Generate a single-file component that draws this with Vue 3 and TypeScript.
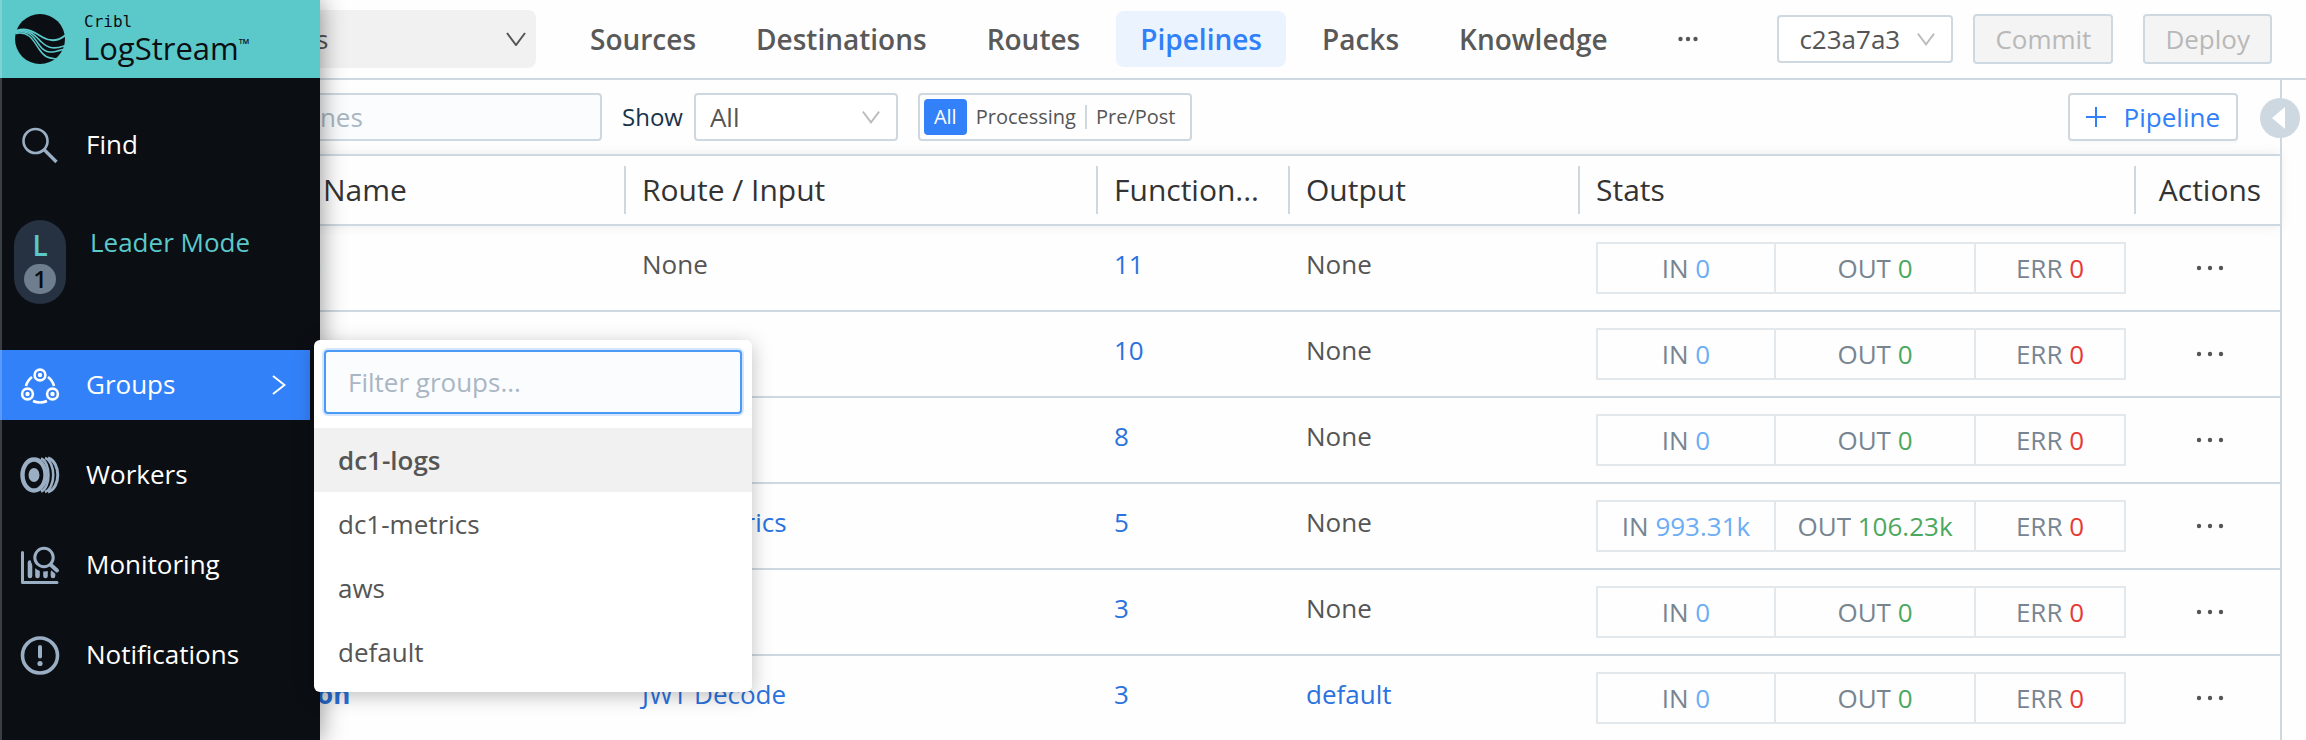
<script setup lang="ts">
import { ref } from 'vue'

interface Pipeline {
  name: string
  route: string
  functions: number
  output: string
  in: string
  out: string
  err: string
}

const tabs = ['Sources', 'Destinations', 'Routes', 'Pipelines', 'Packs', 'Knowledge']
const activeTab = ref('Pipelines')

const groups = ['dc1-logs', 'dc1-metrics', 'aws', 'default']
const activeGroup = ref('dc1-logs')
const groupFilter = ref('')

const kinds = ['Processing', 'Pre/Post']

const pipelines: Pipeline[] = [
  { name: 'main', route: 'None', functions: 11, output: 'None', in: '0', out: '0', err: '0' },
  { name: 'dns', route: 'None', functions: 10, output: 'None', in: '0', out: '0', err: '0' },
  { name: 'logs', route: 'None', functions: 8, output: 'None', in: '0', out: '0', err: '0' },
  { name: 'stats', route: 'dc1_metrics', functions: 5, output: 'None', in: '993.31k', out: '106.23k', err: '0' },
  { name: 'trim', route: 'None', functions: 3, output: 'None', in: '0', out: '0', err: '0' },
  { name: 'session', route: 'JWT Decode', functions: 3, output: 'default', in: '0', out: '0', err: '0' },
]
</script>

<template>
  <div class="app">
    <aside class="sidebar">
      <a href="#" class="brand">
        <svg class="brand-mark" viewBox="0 0 50 50" aria-hidden="true">
          <circle cx="25" cy="25" r="25" fill="#0b0e13" />
          <g fill="none" stroke="#5bc9ca" stroke-linecap="round">
            <path stroke-width="1.8" d="M1 16.500C14 13 20 19 28 23.500S43 27 50 21.500" />
            <path stroke-width="1.6" d="M1 17.500C15 14 20 22 27 28.500S40 35 49 32" />
            <path stroke-width="1.5" d="M1 18.500C15 15 19 24 25 32S37 39 47.500 35.500" />
            <path stroke-width="1.5" d="M1 19.500C14 17 18 26 24 35S34 44 41 45" />
          </g>
        </svg>
        <span class="brand-text">
          <span class="brand-top">Cribl</span>
          <span class="brand-name">LogStream<sup>™</sup></span>
        </span>
      </a>

      <nav class="menu">
        <a href="#" class="item find">
          <svg class="icon" viewBox="0 0 40 40" aria-hidden="true">
            <g fill="none" stroke="#9aaec4" stroke-width="2.6">
              <circle cx="15.500" cy="16" r="12" />
              <path stroke-width="3.400" d="M24 24.500 36.500 37" />
            </g>
          </svg>
          <span>Find</span>
        </a>

        <a href="#" class="leader">
          <span class="leader-badge">
            <b>L</b>
            <span class="leader-count">1</span>
          </span>
          <span>Leader Mode</span>
        </a>

        <a href="#" class="item current">
          <svg class="icon" viewBox="0 0 40 40" aria-hidden="true">
            <g fill="none" stroke="#fff" stroke-width="2.6">
              <circle cx="20" cy="10" r="5.400" />
              <circle cx="7.500" cy="29" r="5.400" />
              <circle cx="32.500" cy="29" r="5.400" />
              <path d="M12 12A16 16 0 0 0 6 21" />
              <path d="M28 12A16 16 0 0 1 34 21" />
              <path d="M13 36Q20 39 27 36" />
            </g>
            <g fill="#fff">
              <circle cx="20" cy="10" r="2.200" />
              <circle cx="7.500" cy="29" r="2.200" />
              <circle cx="32.500" cy="29" r="2.200" />
            </g>
          </svg>
          <span>Groups</span>
          <svg class="caret" viewBox="0 0 14 20" aria-hidden="true">
            <path d="M1 1 12.500 10 1 19" fill="none" stroke="#fff" stroke-width="2" />
          </svg>
        </a>
        <a href="#" class="item">
          <svg class="icon" viewBox="0 0 40 40" aria-hidden="true">
            <g fill="none" stroke="#9aaec4">
              <ellipse cx="14" cy="20" rx="11.500" ry="15.500" stroke-width="4.400" />
              <path stroke-width="2.600" d="M21 3.500C31 7 31 33 21 36.500" />
              <path stroke-width="2.600" d="M25 3C36 7 36 33 25 37" />
              <path stroke-width="3" d="M28 3C41 7 41 33 28 37" />
            </g>
            <ellipse cx="14" cy="20" rx="5.500" ry="7" fill="#9aaec4" />
          </svg>
          <span>Workers</span>
        </a>
        <a href="#" class="item">
          <svg class="icon" viewBox="0 0 40 40" aria-hidden="true">
            <g fill="none" stroke="#9aaec4" stroke-linecap="round">
              <path stroke-width="3" stroke-linejoin="round" d="M2.500 7.500V37.500H37" />
              <path stroke-width="4.600" d="M10 17.500V31M17.500 22V31M25.500 26V31M33 27V31" />
              <circle cx="24" cy="13" r="10" stroke="#0b0e13" stroke-width="7" />
              <path stroke="#0b0e13" stroke-width="8" d="M31 20 37 25" />
              <circle cx="24" cy="12.500" r="9.200" stroke-width="3" />
              <path stroke-width="4" d="M31 20 37 25.500" />
            </g>
          </svg>
          <span>Monitoring</span>
        </a>
        <a href="#" class="item">
          <svg class="icon" viewBox="0 0 40 40" aria-hidden="true">
            <circle cx="20" cy="20.500" r="17.500" fill="none" stroke="#9aaec4" stroke-width="3.600" />
            <path d="M20 12V21.500" stroke="#9aaec4" stroke-width="4" stroke-linecap="round" />
            <circle cx="20" cy="28.500" r="2.600" fill="#9aaec4" />
          </svg>
          <span>Notifications</span>
        </a>
      </nav>
    </aside>

    <section class="popup" aria-label="Groups">
      <input v-model="groupFilter" class="popup-filter" type="text" placeholder="Filter groups..." aria-label="Filter groups" />
      <ul class="popup-list">
        <li v-for="g in groups" :key="g">
          <button type="button" :class="{ selected: g === activeGroup }" @click="activeGroup = g">{{ g }}</button>
        </li>
      </ul>
    </section>

    <header class="topbar">
      <label class="select-box group-select">
        <select v-model="activeGroup" aria-label="Group">
          <option v-for="g in groups" :key="g">{{ g }}</option>
        </select>
        <svg viewBox="0 0 20 14" aria-hidden="true"><path d="M1 1 10 13 19 1" /></svg>
      </label>
      <nav class="tabs">
        <a v-for="t in tabs" :key="t" href="#" :class="{ active: t === activeTab }" @click.prevent="activeTab = t">{{ t }}</a>
        <button type="button" class="dots" aria-label="More">
          <svg viewBox="0 0 20 6" width="20" height="6"><circle cx="2.500" cy="3" r="2.200" /><circle cx="10" cy="3" r="2.200" /><circle cx="17.500" cy="3" r="2.200" /></svg>
        </button>
      </nav>
      <label class="select-box version-select">
        <select aria-label="Version"><option>c23a7a3</option></select>
        <svg viewBox="0 0 20 14" aria-hidden="true"><path d="M1 1 10 13 19 1" /></svg>
      </label>
      <button type="button" class="action" disabled>Commit</button>
      <button type="button" class="action" disabled>Deploy</button>
    </header>

    <div class="body">
      <main class="content">
        <div class="toolbar">
          <input class="search" type="text" placeholder="Filter pipelines" aria-label="Filter pipelines" />
          <label class="show-label" for="show">Show</label>
          <span class="select-box show-select">
            <select id="show"><option>All</option></select>
            <svg viewBox="0 0 20 14" aria-hidden="true"><path d="M1 1 10 13 19 1" /></svg>
          </span>
          <div class="kinds">
            <button type="button" class="kind-all">All</button>
            <button v-for="k in kinds" :key="k" type="button" class="kind">{{ k }}</button>
          </div>
          <button type="button" class="add">
            <svg viewBox="0 0 20 20" width="20" height="20" aria-hidden="true"><path d="M10 0V20M0 10H20" stroke="#2f80f9" stroke-width="2" /></svg>
            Pipeline
          </button>
        </div>

        <table class="grid">
          <colgroup>
            <col class="c-name" /><col class="c-route" /><col class="c-func" /><col class="c-out" /><col class="c-stats" /><col class="c-act" />
          </colgroup>
          <thead>
            <tr>
              <th scope="col"><span>Name</span></th>
              <th scope="col"><span>Route / Input</span></th>
              <th scope="col"><span>Function...</span></th>
              <th scope="col"><span>Output</span></th>
              <th scope="col"><span>Stats</span></th>
              <th scope="col"><span>Actions</span></th>
            </tr>
          </thead>
          <tbody>
            <tr v-for="p in pipelines" :key="p.name">
              <td><a href="#" class="name">{{ p.name }}</a></td>
              <td><a v-if="p.route !== 'None'" href="#">{{ p.route }}</a><template v-else>None</template></td>
              <td><a href="#">{{ p.functions }}</a></td>
              <td><a v-if="p.output !== 'None'" href="#">{{ p.output }}</a><template v-else>None</template></td>
              <td class="stats-cell">
                <div class="stats">
                  <span>IN <i class="in">{{ p.in }}</i></span>
                  <span>OUT <i class="out">{{ p.out }}</i></span>
                  <span>ERR <i class="err">{{ p.err }}</i></span>
                </div>
              </td>
              <td class="act-cell">
                <button type="button" class="dots" :aria-label="`Actions for ${p.name}`">
                  <svg viewBox="0 0 28 6" width="28" height="6"><circle cx="3" cy="3" r="2.200" /><circle cx="14" cy="3" r="2.200" /><circle cx="25" cy="3" r="2.200" /></svg>
                </button>
              </td>
            </tr>
          </tbody>
        </table>
      </main>
      <div class="drawer">
        <button type="button" class="drawer-toggle" aria-label="Open panel">
          <svg viewBox="0 0 40 40" width="40" height="40"><path d="M12 20 25 9V31Z" fill="#fff" /></svg>
        </button>
      </div>
    </div>
  </div>
</template>

<style>
body {
  margin: 0;
}
</style>

<style scoped>
* {
  box-sizing: border-box;
}

.app {
  position: relative;
  height: 100vh;
  overflow: hidden;
  padding-left: 80px;
  background: #fefefe;
  color: #555;
  font: 26px/36px 'Open Sans', 'Noto Sans', sans-serif;
}

button,
input,
select {
  font: inherit;
  color: inherit;
  margin: 0;
}

a {
  color: #2a72de;
  text-decoration: none;
}

/* Sidebar, expanded over the page */
.sidebar {
  position: absolute;
  z-index: 2;
  top: 0;
  bottom: 0;
  left: 0;
  width: 320px;
  background: #0b0e13;
  box-shadow: 0 0 24px rgba(0, 0, 0, 0.45);
}

.sidebar::after {
  content: '';
  position: absolute;
  inset: 0 auto 0 0;
  width: 2px;
  background: rgba(255, 255, 255, 0.2);
}

.brand {
  display: flex;
  align-items: center;
  gap: 18px;
  height: 78px;
  padding-left: 15px;
  background: #5bc9ca;
  color: #0b0e13;
}

.brand-mark {
  width: 50px;
  height: 50px;
}

.brand-text {
  display: flex;
  flex-direction: column;
  padding-bottom: 4px;
}

.brand-top {
  padding-left: 1px;
  font: 16px/22px 'DejaVu Sans Mono', monospace;
}

.brand-name {
  font-size: 31px;
  line-height: 30px;
}

.brand-name sup {
  font-size: 14px;
  line-height: 0;
  vertical-align: 11px;
}

.menu {
  display: flex;
  flex-direction: column;
  gap: 20px;
  padding: 32px 10px 0 0;
}

.item {
  display: flex;
  align-items: center;
  gap: 26px;
  height: 70px;
  padding: 0 24px 0 20px;
  color: #fff;
}

.item span {
  padding-bottom: 2px;
}

.icon {
  width: 40px;
  height: 40px;
}

.current {
  background: #3381f9;
}

.caret {
  width: 14px;
  height: 20px;
  margin-left: auto;
}

.leader {
  display: flex;
  gap: 24px;
  margin: 20px 0 26px;
  padding-left: 14px;
  color: #5bc9ca;
}

.leader > span:last-child {
  padding-top: 4px;
}

.leader-badge {
  display: flex;
  flex-direction: column;
  align-items: center;
  width: 52px;
  height: 84px;
  padding-top: 6px;
  border-radius: 26px;
  background: #263242;
}

.leader-badge b {
  font-size: 28px;
  font-weight: 600;
  line-height: 38px;
}

.leader-count {
  width: 32px;
  height: 30px;
  border-radius: 15px;
  background: #6e7e8e;
  color: #0b0e13;
  font-size: 24px;
  font-weight: 600;
  line-height: 30px;
  text-align: center;
}

/* Group picker */
.popup {
  position: absolute;
  z-index: 3;
  top: 340px;
  left: 314px;
  width: 438px;
  padding: 10px 0 8px;
  border-radius: 6px;
  background: #fff;
  box-shadow: 0 4px 20px rgba(0, 0, 0, 0.25);
}

.popup-filter {
  display: block;
  width: calc(100% - 20px);
  height: 64px;
  margin: 0 10px 14px;
  padding: 0 22px;
  border: 2px solid #4a9af8;
  border-radius: 4px;
  outline: 0;
  background: #fbfcfe;
  box-shadow: 0 0 0 2px #d5e6fc;
}

.popup-filter::placeholder,
.search::placeholder {
  color: #a9b6c3;
  opacity: 1;
}

.popup-list {
  margin: 0;
  padding: 0;
  list-style: none;
}

.popup-list button {
  display: block;
  width: 100%;
  height: 64px;
  padding: 0 24px;
  border: 0;
  background: none;
  text-align: left;
}

.popup-list .selected {
  background: #f1f1f1;
  font-weight: 600;
}

/* Top bar */
.topbar {
  display: flex;
  align-items: center;
  height: 80px;
  padding-right: 34px;
  border-bottom: 2px solid #ced8e0;
}

.select-box {
  display: grid;
  align-items: center;
}

.select-box select {
  grid-area: 1 / 1;
  width: 100%;
  height: 48px;
  border: 2px solid #ced8e0;
  border-radius: 4px;
  appearance: none;
  background: #fff;
}

.select-box svg {
  grid-area: 1 / 1;
  justify-self: end;
  width: 18px;
  height: 14px;
  margin-right: 18px;
  fill: none;
  stroke: #bbb;
  stroke-width: 2;
  pointer-events: none;
}

.group-select {
  width: 336px;
  margin-left: 120px;
}

.group-select select {
  height: 58px;
  padding: 0 28px;
  border: 0;
  border-radius: 8px;
  background: #f1f1f1;
}

.group-select svg {
  width: 20px;
  margin-right: 10px;
  stroke: #555;
}

.tabs {
  display: flex;
  flex: 1;
  align-items: center;
  gap: 12px;
  margin-left: 30px;
}

.tabs a {
  height: 56px;
  padding: 0 24px;
  border-radius: 8px;
  color: #595959;
  font-size: 28px;
  font-weight: 600;
  line-height: 56px;
}

.tabs .active {
  background: #ebf3fe;
  color: #2f80f9;
}

.dots {
  display: flex;
  padding: 8px;
  border: 0;
  background: none;
  fill: #555;
}

.tabs .dots {
  margin-left: 26px;
}

.version-select {
  width: 176px;
  margin-right: 20px;
}

.version-select select {
  padding: 0 20px;
}

.action {
  height: 50px;
  padding: 0 20px;
  border: 2px solid #ced8e0;
  border-radius: 4px;
  background: #f4f4f4;
  color: #b8b8b8;
}

.action + .action {
  margin-left: 30px;
}

/* Page body */
.body {
  display: flex;
}

.content {
  flex: 1;
  min-width: 0;
}

.toolbar {
  display: flex;
  align-items: center;
  height: 74px;
  padding-right: 42px;
}

.search {
  width: 450px;
  height: 48px;
  margin-left: 72px;
  padding: 0 32px;
  border: 2px solid #ced8e0;
  border-radius: 4px;
  background: #fbfcfe;
}

.show-label {
  margin: 0 11px 0 20px;
  color: #16324a;
  font-size: 24px;
}

.show-select {
  width: 204px;
}

.show-select select {
  padding: 0 14px;
}

.kinds {
  display: flex;
  align-items: center;
  height: 48px;
  margin-left: 20px;
  padding: 0 6px 0 4px;
  border: 2px solid #ced8e0;
  border-radius: 4px;
  font-size: 20px;
}

.kinds button {
  border: 0;
  background: none;
}

.kinds .kind-all {
  height: 36px;
  padding: 0 10px;
  border-radius: 4px;
  background: #3381f9;
  color: #fff;
}

.kind {
  height: 24px;
  padding: 0 9px;
  line-height: 24px;
}

.kinds .kind + .kind {
  border-left: 2px solid #ced8e0;
}

.add {
  display: flex;
  align-items: center;
  gap: 18px;
  height: 48px;
  margin-left: auto;
  padding: 0 16px;
  border: 2px solid #ced8e0;
  border-radius: 4px;
  background: #fff;
  box-shadow: 0 3px 2px rgba(0, 0, 0, 0.02);
  color: #2f80f9;
}

/* Pipelines table */
.grid {
  width: 100%;
  table-layout: fixed;
  border-spacing: 0;
}

.c-name {
  width: 546px;
}

.c-route {
  width: 472px;
}

.c-func {
  width: 192px;
}

.c-out {
  width: 290px;
}

.c-stats {
  width: 556px;
}

.c-act {
  width: 144px;
}

thead {
  box-shadow: 0 0 12px rgba(0, 0, 0, 0.08);
}

th {
  height: 72px;
  padding: 0;
  border: 2px solid #ced8e0;
  border-width: 2px 0;
  background: #fefefe;
  color: #333;
  font-size: 30px;
  font-weight: 400;
  text-align: left;
}

th span {
  display: block;
  padding-left: 16px;
  border-right: 2px solid #ced8e0;
  line-height: 48px;
  white-space: nowrap;
}

th:first-child span {
  padding-left: 243px;
}

th:last-child span {
  padding: 0 0 0 4px;
  border: 0;
  text-align: center;
}

td {
  height: 86px;
  padding: 20px 16px 0;
  border-bottom: 2px solid #ced8e0;
  vertical-align: top;
}

td:first-child {
  padding-left: 175px;
}

.name {
  font-weight: 700;
}

.stats-cell {
  padding: 16px 10px 0 16px;
}

.stats {
  display: grid;
  grid-template-columns: 176fr 200fr 150fr;
  border: 2px solid #e3e8ec;
  color: #778592;
  line-height: 48px;
  text-align: center;
}

.stats span + span {
  border-left: 2px solid #e3e8ec;
}

.stats i {
  font-style: normal;
}

.in {
  color: #6cadf5;
}

.out {
  color: #4ba85f;
}

.err {
  color: #e63a35;
}

.act-cell {
  padding: 0 0 0 4px;
  vertical-align: middle;
}

.act-cell .dots {
  margin: 0 auto;
}

.drawer {
  width: 26px;
  min-height: 100vh;
  border-left: 2px solid #ced8e0;
}

.drawer-toggle {
  display: block;
  position: relative;
  z-index: 1;
  width: 40px;
  height: 40px;
  margin: 18px 0 0 -22px;
  padding: 0;
  border: 0;
  border-radius: 50%;
  background: #ced8e0;
}
</style>
